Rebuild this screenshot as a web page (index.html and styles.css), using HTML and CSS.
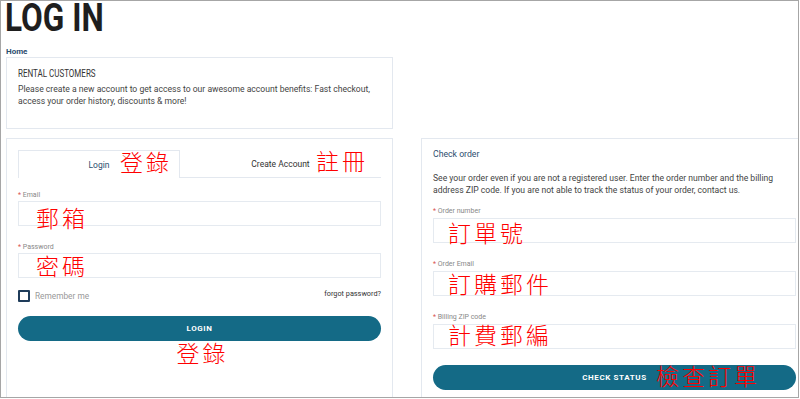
FILE: index.html
```html
<!DOCTYPE html>
<html lang="zh-TW">
<head>
    <meta charset="UTF-8">
    <meta name="viewport" content="width=device-width, initial-scale=1.0">
    <title>Log in</title>
    <link rel="stylesheet" href="styles.css">
</head>
<body>
    <div class="frame">
        <h1 class="page-title"><span class="narrow">LOG IN</span></h1>
        <div class="breadcrumb">Home</div>

        <div class="columns">
            <div class="info-box">
                <div class="box-title"><span class="narrow">RENTAL CUSTOMERS</span></div>
                <p class="box-text">Please create a new account to get access to our awesome account benefits: Fast checkout, access your order history, discounts &amp; more!</p>
            </div>
            <div></div>

            <div class="panel">
                <div class="tabs">
                    <div class="tab tab-active">Login<span class="note note-tab1">登錄</span></div>
                    <div class="tab">Create Account<span class="note note-tab2">註冊</span></div>
                </div>

                <form class="login-form">
                    <div class="field">
                        <label class="field-label"><span class="req">*</span> Email</label>
                        <div class="input"><span class="note note-in1">郵箱</span></div>
                    </div>
                    <div class="field">
                        <label class="field-label"><span class="req">*</span> Password</label>
                        <div class="input"><span class="note note-in2">密碼</span></div>
                    </div>
                    <div class="options">
                        <label class="remember"><span class="checkbox"></span>Remember me</label>
                        <a class="forgot">forgot password?</a>
                    </div>
                    <div class="btn">LOGIN</div>
                    <div class="note-below">登錄</div>
                </form>
            </div>

            <div class="panel panel-right">
                <div class="panel-title">Check order</div>
                <p class="panel-text">See your order even if you are not a registered user. Enter the order number and the billing address ZIP code. If you are not able to track the status of your order, contact us.</p>
                <div class="field">
                    <label class="field-label"><span class="req">*</span> Order number</label>
                    <div class="input"><span class="note note-r1">訂單號</span></div>
                </div>
                <div class="field">
                    <label class="field-label"><span class="req">*</span> Order Email</label>
                    <div class="input"><span class="note note-r2">訂購郵件</span></div>
                </div>
                <div class="field">
                    <label class="field-label"><span class="req">*</span> Billing ZIP code</label>
                    <div class="input"><span class="note note-r3">計費郵編</span></div>
                </div>
                <div class="btn btn-check">CHECK STATUS<span class="note note-btn">檢查訂單</span></div>
            </div>
        </div>
    </div>
</body>
</html>
```

FILE: styles.css
```css
body {
    margin: 0;
    background: #fff;
    font-family: Roboto, "Noto Sans", sans-serif;
    color: #333;
}
.frame {
    width: 799px;
    height: 398px;
    box-sizing: border-box;
    border: 1px solid #a6a6a6;
    overflow: hidden;
    padding-left: 5px;
}
.narrow {
    display: inline-block;
    transform-origin: left center;
}
.page-title {
    margin: 0 0 0 -1px;
    font-size: 38px;
    line-height: 34px;
    font-weight: 700;
    color: #1e1e1e;
}
.page-title .narrow {
    transform: scaleX(0.83);
}
.breadcrumb {
    margin-top: 12px;
    font-size: 8px;
    line-height: 10px;
    font-weight: 700;
    color: #2d4d6e;
}
.columns {
    display: grid;
    grid-template-columns: 387px 387px;
    gap: 9px 28px;
}
.info-box {
    height: 72px;
    box-sizing: border-box;
    border: 1px solid #e3e8ef;
    padding: 10px 11px;
}
.box-title {
    font-size: 10px;
    line-height: 12px;
    color: #333;
}
.box-title .narrow {
    transform: scaleX(0.8);
}
.box-text {
    margin: 4px 0 0;
    font-size: 8.6px;
    line-height: 11.5px;
    color: #444;
}
.panel {
    border: 1px solid #e3e8ef;
    padding: 11px;
}
.tabs {
    display: flex;
    border-bottom: 1px solid #e3e8ef;
}
.tab {
    position: relative;
    height: 27px;
    display: flex;
    align-items: center;
    justify-content: center;
    font-size: 8.5px;
    color: #333;
}
.tab-active {
    width: 162px;
    box-sizing: border-box;
    border: 1px solid #e3e8ef;
    border-bottom: none;
    margin-bottom: -1px;
    height: 28px;
    background: #fff;
    color: #2d4d6e;
}
.tab:not(.tab-active) {
    flex: 1;
}
.login-form {
    margin: 12px 0 0;
}
.field {
    margin-bottom: 16px;
}
.field-label {
    display: block;
    font-size: 7px;
    line-height: 10px;
    color: #888;
    margin-bottom: 1px;
}
.req {
    color: #d9534f;
}
.input {
    position: relative;
    height: 25px;
    box-sizing: border-box;
    border: 1px solid #e5eaf0;
}
.options {
    display: flex;
    justify-content: space-between;
    align-items: flex-start;
    margin-top: -4px;
}
.remember {
    display: flex;
    align-items: center;
    font-size: 8.3px;
    color: #999;
}
.checkbox {
    width: 12px;
    height: 12px;
    box-sizing: border-box;
    border: 2px solid #1f3c5a;
    border-radius: 1px;
    margin-right: 5px;
}
.forgot {
    font-size: 7.3px;
    line-height: 8px;
    color: #333;
}
.btn {
    position: relative;
    margin-top: 14px;
    height: 25px;
    border-radius: 13px;
    background: #146a86;
    color: #fff;
    font-size: 8px;
    font-weight: 700;
    letter-spacing: 0.6px;
    display: flex;
    align-items: center;
    justify-content: center;
}
.note {
    position: absolute;
    font-family: "Noto Sans CJK TC", sans-serif;
    font-size: 23px;
    line-height: 23px;
    font-weight: 300;
    letter-spacing: 3px;
    color: #f00;
    white-space: nowrap;
}
.note-below {
    font-family: "Noto Sans CJK TC", sans-serif;
    font-size: 23px;
    line-height: 23px;
    font-weight: 300;
    letter-spacing: 3px;
    color: #f00;
    text-align: center;
    padding-left: 6px;
}
.note-tab1 { left: 101px; top: -1px; }
.note-tab2 { left: 136px; top: -1px; }
.note-in1 { left: 17px; top: 4px; }
.note-in2 { left: 17px; top: 0; }
.note-r1 { left: 14px; top: 2px; }
.note-r2 { left: 14px; top: 0; }
.note-r3 { left: 14px; top: -2px; }
.note-btn { left: 223px; top: -1px; letter-spacing: 3px; }
.panel-right {
    padding-top: 10px;
}
.panel-title {
    font-size: 8.7px;
    line-height: 11px;
    color: #2d4d6e;
}
.panel-text {
    margin: 12px 0 10px;
    font-size: 8.6px;
    line-height: 12px;
    color: #444;
}
.panel-right .field-label {
    margin-bottom: 2px;
}
.btn-check {
    margin-top: 15px;
}
```
